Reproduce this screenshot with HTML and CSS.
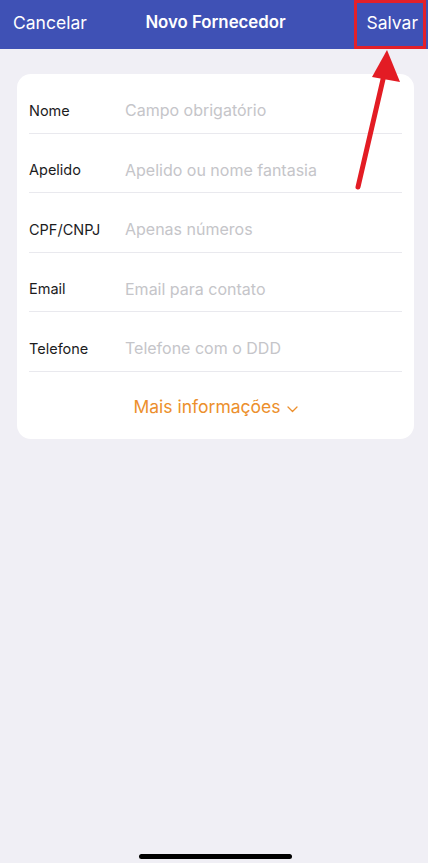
FILE: index.html
```html
<!DOCTYPE html>
<html lang="pt-BR">
<head>
    <meta charset="UTF-8">
    <meta name="viewport" content="width=device-width, initial-scale=1.0">
    <title>Novo Fornecedor</title>
    <link rel="stylesheet" href="styles.css">
</head>
<body>

<div class="tela">
    <header class="topo">
        <button class="acao">Cancelar</button>
        <h1 class="titulo">Novo Fornecedor</h1>
        <button class="acao salvar">Salvar</button>
    </header>

    <form class="cartao">
        <label class="linha">
            <span class="rotulo">Nome</span>
            <input type="text" placeholder="Campo obrigatório">
        </label>
        <label class="linha">
            <span class="rotulo">Apelido</span>
            <input type="text" placeholder="Apelido ou nome fantasia">
        </label>
        <label class="linha">
            <span class="rotulo">CPF/CNPJ</span>
            <input type="text" placeholder="Apenas números">
        </label>
        <label class="linha">
            <span class="rotulo">Email</span>
            <input type="email" placeholder="Email para contato">
        </label>
        <label class="linha">
            <span class="rotulo">Telefone</span>
            <input type="tel" placeholder="Telefone com o DDD">
        </label>
        <button type="button" class="mais">
            Mais informações
            <svg class="seta" width="11" height="7" viewBox="0 0 11 7"><path d="M1 1l4.5 4.5L10 1" fill="none" stroke="currentColor" stroke-width="1.3" stroke-linecap="round" stroke-linejoin="round"/></svg>
        </button>
    </form>

    <div class="destaque"></div>
    <svg class="flecha" width="60" height="150" viewBox="0 0 60 150">
        <line x1="6" y1="137" x2="32" y2="25" stroke="#e31c24" stroke-width="5" stroke-linecap="round"/>
        <polygon points="35,0 48,32 20,27" fill="#e31c24"/>
    </svg>

    <div class="home"></div>
</div>

</body>
</html>
```

FILE: styles.css
```css
body {
    margin: 0;
    background-color: #f0eff5;
    font-family: 'Inter', 'Liberation Sans', sans-serif;
}

.tela {
    position: relative;
    height: 863px;
    overflow: hidden;
}

.topo {
    display: grid;
    grid-template-columns: 1fr auto 1fr;
    align-items: center;
    height: 49px;
    padding: 0 10px 0 13px;
    background-color: #3f51b5;
    color: #fff;
}

.acao {
    justify-self: start;
    padding: 0;
    border: none;
    background: none;
    color: #fff;
    font-family: inherit;
    font-size: 17.5px;
    margin-top: -5px;
}

.salvar {
    justify-self: end;
}

.titulo {
    margin: -5px 0 0 0;
    font-size: 16.8px;
    font-weight: 600;
}

.cartao {
    margin: 25px 14px 0 17px;
    padding: 0 12px;
    background-color: #fff;
    border-radius: 14px;
}

.linha {
    display: flex;
    align-items: center;
    height: 44.5px;
    padding-top: 14px;
    border-bottom: 1px solid #e9e9ee;
}

.rotulo {
    width: 96px;
    font-size: 14.5px;
    color: #1c1c1e;
}

.linha input {
    flex: 1;
    border: none;
    outline: none;
    padding: 0;
    font-family: inherit;
    font-size: 16px;
    color: #1c1c1e;
}

.linha input::placeholder {
    color: #c5c5c9;
}

.mais {
    display: flex;
    align-items: center;
    justify-content: center;
    gap: 6px;
    width: 100%;
    height: 67px;
    padding: 2px 0 0 0;
    border: none;
    background: none;
    color: #ec8f2c;
    font-family: inherit;
    font-size: 17.5px;
}

.seta {
    margin-top: 6px;
}

.destaque {
    position: absolute;
    top: 0;
    left: 354px;
    width: 66px;
    height: 43px;
    border: 3px solid #e3202a;
}

.flecha {
    position: absolute;
    top: 50px;
    left: 352px;
}

.home {
    position: absolute;
    left: 139px;
    bottom: 4px;
    width: 153px;
    height: 5px;
    border-radius: 3px;
    background-color: #000;
}
```
